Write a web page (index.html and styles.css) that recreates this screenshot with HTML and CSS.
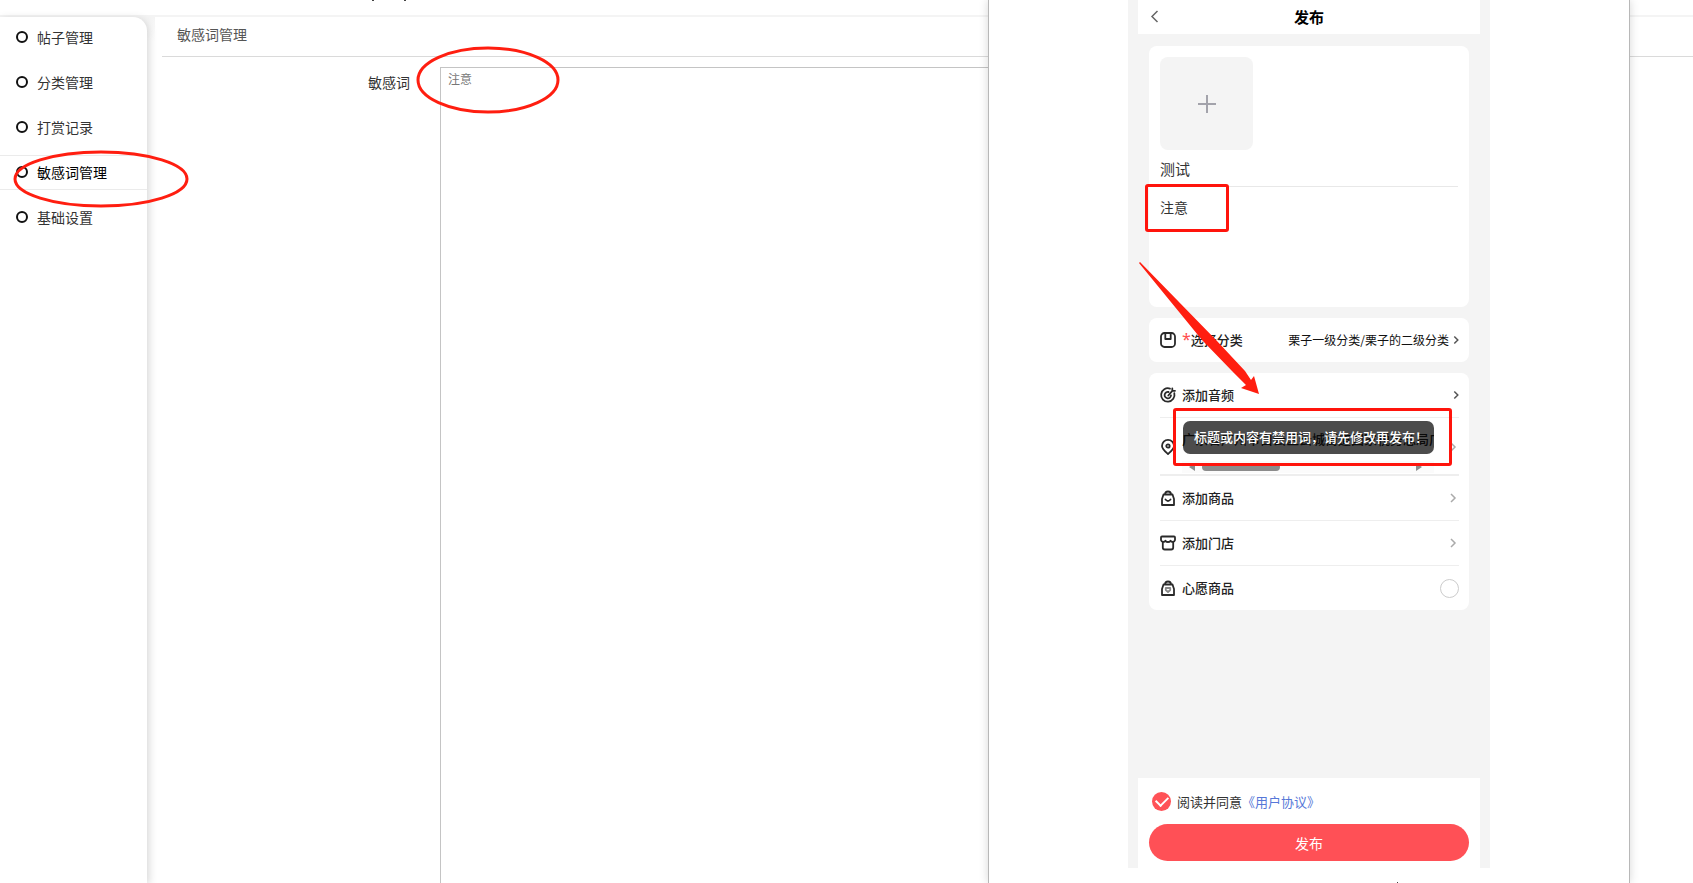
FILE: index.html
```html
<!DOCTYPE html>
<html lang="zh-CN">
<head>
<meta charset="utf-8">
<title>敏感词管理</title>
<link rel="stylesheet" href="styles.css">
</head>
<body>
<div class="admin">
  <header class="topbar"><i class="speck"></i><i class="speck"></i></header>
  <div class="body">
    <nav class="sidebar">
      <a class="item" href="#"><i class="dot"></i>帖子管理</a>
      <a class="item" href="#"><i class="dot"></i>分类管理</a>
      <a class="item" href="#"><i class="dot"></i>打赏记录</a>
      <a class="item active" href="#"><i class="dot"></i>敏感词管理
        <svg class="mark mark-nav" viewBox="0 0 176 58"><ellipse cx="88" cy="29" rx="86" ry="27"/></svg>
      </a>
      <a class="item" href="#"><i class="dot"></i>基础设置</a>
    </nav>
    <main class="content">
      <h1 class="crumb">敏感词管理</h1>
      <div class="field">
        <label for="words">敏感词</label>
        <textarea id="words">注意</textarea>
        <svg class="mark mark-field" viewBox="0 0 144 69"><ellipse cx="72" cy="34" rx="70" ry="32"/></svg>
      </div>
    </main>
  </div>
</div>

<section class="window">
  <div class="phone">
    <header class="bar">
      <button class="back" aria-label="返回"><svg width="8" height="13" viewBox="0 0 8 13"><path d="M6.500 1L1 6.500L6.500 12"/></svg></button>
      <h2>发布</h2>
    </header>
    <div class="cards">
      <div class="card compose">
        <button class="upload" aria-label="添加图片"><svg width="20" height="20" viewBox="0 0 20 20"><path d="M10 1V19M1 10H19"/></svg></button>
        <input class="title" aria-label="标题" value="测试">
        <div class="text">
          <textarea aria-label="内容">注意</textarea>
          <i class="box box-text"></i>
        </div>
      </div>
      <div class="card">
        <a class="row last" href="#">
          <svg class="icon" viewBox="0 0 16 16"><rect x="1" y="1" width="14" height="14" rx="3.500"/><path d="M5.300 1V7H10.700V1"/></svg>
          <span><b class="star">*</b>选择分类</span>
          <span class="value">栗子一级分类/栗子的二级分类</span>
          <svg class="chev dark" viewBox="0 0 6 10"><path d="M1.300 1.500L4.800 5L1.300 8.500"/></svg>
        </a>
        <svg class="arrow" viewBox="0 0 122 134"><path d="M0 1L1 0L78 79L106 109L112 118L115 114L120 132L102 126L107 123L93 109L63 78Z"/></svg>
      </div>
      <div class="card">
        <a class="row" href="#">
          <svg class="icon" viewBox="0 0 16 16"><path d="M10 1.600A6.700 6.700 0 1 0 14.300 6.200M8.500 5A3.200 3.200 0 1 0 11 8.300M8.300 8.500L12.300 3.800V1.500M12.300 3.800H15"/></svg>
          <span>添加音频</span>
          <svg class="chev dark" viewBox="0 0 6 10"><path d="M1.300 1.500L4.800 5L1.300 8.500"/></svg>
        </a>
        <div class="row place">
          <svg class="icon" viewBox="0 0 16 16"><path d="M8 15C5 12.200 2 9.800 2 6.900A6 6 0 0 1 14 6.900C14 9.800 11 12.200 8 15Z"/><circle cx="8" cy="7" r="1.700"/></svg>
          <div class="address">
            <p>广东省广州市白云区云城街道国家税务总局广州</p>
            <div class="scroll"><i class="left"></i><i class="thumb"></i><i class="right"></i></div>
          </div>
          <svg class="chev" viewBox="0 0 6 10"><path d="M1 1L5 5L1 9"/></svg>
          <div class="toast" role="alert">标题或内容有禁用词，请先修改再发布！</div>
          <i class="box box-toast"></i>
        </div>
        <a class="row" href="#">
          <svg class="icon" viewBox="0 0 16 16"><path d="M3.500 4.500H12.500L14 9V15H2V9ZM5 4.500Q5 1.500 8 1.500Q11 1.500 11 4.500M5.500 9.500Q8 12.500 10.500 9.500"/></svg>
          <span>添加商品</span>
          <svg class="chev" viewBox="0 0 6 10"><path d="M1 1L5 5L1 9"/></svg>
        </a>
        <a class="row" href="#">
          <svg class="icon" viewBox="0 0 16 16"><path d="M2 1.500H14Q15 1.500 15 2.500V5Q14.500 7 12.800 7Q11.300 7 10.500 5.800Q9.500 7 8 7Q6.500 7 5.500 5.800Q4.700 7 3.200 7Q1.500 7 1 5V2.500Q1 1.500 2 1.500ZM2.800 7V12.500Q2.800 14.500 4.800 14.500H11.200Q13.200 14.500 13.200 12.500V7"/></svg>
          <span>添加门店</span>
          <svg class="chev" viewBox="0 0 6 10"><path d="M1 1L5 5L1 9"/></svg>
        </a>
        <label class="row last">
          <svg class="icon" viewBox="0 0 16 16"><path d="M3.500 4.500H12.500L14 9V15H2V9ZM5 4.500Q5 1.500 8 1.500Q11 1.500 11 4.500"/><path class="soft" d="M8 12L5.800 10V8H10.200V10Z"/></svg>
          <span>心愿商品</span>
          <input class="radio" type="checkbox">
        </label>
      </div>
    </div>
    <footer class="foot">
      <div class="agree">
        <input id="agree" class="tick" type="checkbox" checked>
        <label for="agree">阅读并同意</label><a href="#">《用户协议》</a>
      </div>
      <button class="submit">发布</button>
    </footer>
  </div>
  <i class="fleck"></i>
</section>
</body>
</html>
```
FILE: styles.css
```css
* { box-sizing: border-box; margin: 0; }
body {
  height: 100vh;
  overflow: hidden;
  position: relative;
  background: #fff;
  color: #333;
  font: 14px/20px "Noto Sans CJK SC", sans-serif;
}
a { color: inherit; text-decoration: none; }
button, input, textarea { font: inherit; color: inherit; border: 0; padding: 0; background: none; }
textarea { resize: none; outline: 0; overflow: hidden; display: block; }
svg { fill: none; flex: none; overflow: visible; }
i { display: block; }

/* admin page */
.admin { height: 100%; display: flex; flex-direction: column; }
.topbar { height: 17px; border-bottom: 2px solid #f4f4f4; display: flex; gap: 30px; padding-left: 372px; }
.speck { width: 2px; height: 1px; background: #444; }
.body { flex: 1; display: flex; gap: 15px; background: linear-gradient(#f4f4f4, #fff 24px) no-repeat 0 0 / 155px 100%; }
.sidebar {
  width: 147px;
  padding-top: 3px;
  display: flex;
  flex-direction: column;
  gap: 10px;
  background: #fff;
  border-radius: 0 14px 0 0;
  box-shadow: 2px 2px 8px rgba(0, 0, 0, .16);
}
.item { position: relative; height: 35px; padding: 0 0 2px 16px; display: flex; align-items: center; gap: 9px; border: solid transparent; border-width: 1px 0; }
.item.active { color: #000; border-color: #ebebeb; }
.dot { width: 12px; height: 12px; border: 2px solid #111; border-radius: 50%; }
.mark { position: absolute; stroke: #ff1e10; stroke-width: 3; z-index: 1; }
.mark-nav { left: 13px; top: -6px; width: 176px; height: 58px; }
.mark-field { left: 254px; top: -11px; width: 144px; height: 69px; }
.content { flex: 1; display: flex; flex-direction: column; }
.crumb { height: 40px; padding: 7px 15px; font-size: 14px; line-height: 20px; font-weight: 400; color: #555; border-bottom: 1px solid #dadada; }
.field { position: relative; flex: 1; display: flex; padding: 10px 80px 0 0; }
.field label { width: 278px; padding: 5px 30px 0 0; text-align: right; }
.field textarea { flex: 1; padding: 1px 7px; font-size: 12px; color: #777; border: 1px solid #c4c4c4; border-bottom: 0; }

/* preview window */
.window {
  position: absolute;
  top: 0;
  bottom: 0;
  right: 63px;
  width: 642px;
  display: flex;
  flex-direction: column;
  align-items: center;
  background: #fff;
  border: solid #b8b8b8;
  border-width: 0 1px;
  box-shadow: 0 0 9px rgba(0, 0, 0, .16);
  z-index: 2;
}
.phone { width: 362px; flex: 1; display: flex; flex-direction: column; padding: 0 10px; background: #f4f4f4; }
.fleck { width: 1px; height: 1px; margin: 14px 0 0 176px; background: #444; }
.bar { display: flex; align-items: center; height: 34px; padding: 0 13px 1px; background: #fff; }
.bar h2 { flex: 1; padding-right: 8px; text-align: center; font-size: 15px; color: #000; }
.back { width: 8px; height: 20px; display: flex; align-items: center; stroke: #666; stroke-width: 1.500; }
.cards { flex: 1; padding: 12px 11px; display: flex; flex-direction: column; gap: 11px; }
.card { position: relative; padding: 0 10px 0 11px; background: #fff; border-radius: 8px; }
.compose { padding: 11px 11px 0; height: 261px; display: flex; flex-direction: column; }
.upload { width: 93px; height: 93px; display: grid; place-items: center; border-radius: 8px; background: #f4f4f4; stroke: #a3a3ab; stroke-width: 2; }
.title { width: 100%; height: 37px; font-size: 15px; border-bottom: 1px solid #e8e8e8; }
.text { position: relative; padding-top: 10px; }
.text textarea { width: 100%; height: 96px; }
.box { position: absolute; border: 3px solid #ff140c; border-radius: 3px; z-index: 3; }
.box-text { left: -15px; top: -3px; width: 84px; height: 48px; }
.row { position: relative; height: 45px; display: flex; align-items: center; gap: 6px; font-size: 13px; font-weight: 500; color: #222; border-bottom: 1px solid #eee; }
.row.last { height: 44px; border-bottom: 0; }
.row > :last-child { margin-left: auto; }
.icon { width: 16px; height: 16px; stroke: #2a2a2a; stroke-width: 1.800; stroke-linejoin: round; stroke-linecap: round; }
.soft { stroke: #888; }
.star { color: #ff4d4f; font: 16px/13px "Noto Sans", sans-serif; }
.value { margin-left: auto; font-size: 12px; font-weight: 400; color: #111; }
.row .chev { width: 6px; height: 10px; margin: 0 3px 0 auto; stroke: #aaa; stroke-width: 1.500; }
.row .chev.dark { stroke: #555; margin-right: 0; }
.row .value + .chev { margin-left: -2px; }
.arrow { position: absolute; left: -10px; top: -56px; width: 122px; height: 134px; fill: #ff1e10; z-index: 4; }
.place { height: 58px; border-bottom-width: 2px; }
.place .icon, .place .chev { position: relative; top: 1px; }
.address { width: 252px; padding-top: 8px; overflow: hidden; white-space: nowrap; }
.address p { line-height: 24px; }
.scroll { height: 12px; margin-top: 10px; padding: 0 12px 0 7px; display: flex; align-items: center; background: #fbfbfb; }
.thumb { width: 78px; height: 8px; margin: 0 auto 0 7px; border-radius: 4px; background: #8b8b8b; }
.left, .right { border: solid transparent; border-width: 4px 0; }
.left { border-right: 6px solid #8b8b8b; }
.right { border-left: 6px solid #8b8b8b; }
.toast { position: absolute; left: 23px; top: 3px; height: 33px; padding: 0 6px 0 11px; line-height: 31px; white-space: nowrap; color: #fff; background: rgba(0, 0, 0, .7); border-radius: 7px; }
.box-toast { left: 13px; top: -10px; width: 279px; height: 58px; }
.radio, .tick { appearance: none; width: 19px; height: 19px; border-radius: 50%; }
.radio { border: 1px solid #ccc; }
.foot { height: 90px; padding: 13px 11px 0; background: #fff; }
.agree { display: flex; align-items: center; padding-left: 3px; height: 21px; font-size: 13px; }
.agree a { color: #5677d8; }
.tick { display: grid; place-items: center; margin: 0 6px 0 0; background: #ff5257; }
.tick::before { content: ""; width: 10px; height: 6px; margin-bottom: 3px; border: solid #fff; border-width: 0 0 2px 2px; transform: rotate(-45deg); }
.submit { width: 100%; height: 37px; margin-top: 12px; border-radius: 19px; color: #fff; background: #ff5056; }
```
